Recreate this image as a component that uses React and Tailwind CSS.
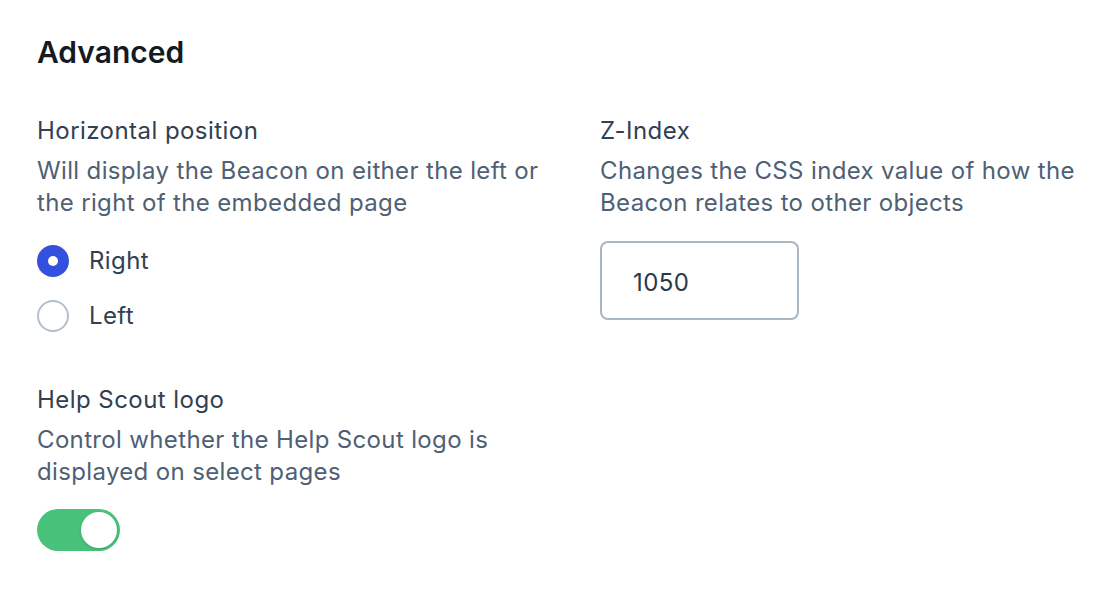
import { useState } from "react";

const Field = ({ label, hint, children }) => (
  <div className="flex flex-col">
    <p className="text-[24px] leading-[32px] tracking-[0.45px] text-[#314052]">{label}</p>
    <p className="mt-[8px] text-[24px] leading-[32px] tracking-[0.35px] text-[#4f6074]">{hint}</p>
    {children}
  </div>
);

const Radio = ({ checked, label, onClick }) => (
  <button onClick={onClick} className="flex items-center gap-[20px] h-[32px]">
    {checked ? (
      <span className="w-[32px] h-[32px] rounded-full bg-[#3451de] flex items-center justify-center">
        <span className="w-[10px] h-[10px] rounded-full bg-white" />
      </span>
    ) : (
      <span className="w-[32px] h-[32px] rounded-full border-2 border-[#b3bfca] bg-white" />
    )}
    <span className="text-[24px] leading-[32px] tracking-[0.4px] text-[#314052]">{label}</span>
  </button>
);

export default function App() {
  const [side, setSide] = useState("right");
  const [logo, setLogo] = useState(true);

  return (
    <div
      className="min-h-screen bg-white pt-[34px] pl-[37px]"
      style={{ fontFamily: "Inter, 'Noto Sans', sans-serif" }}
    >
      <h2 className="text-[30px] leading-[36px] font-semibold text-[#141a22]">Advanced</h2>

      <div className="mt-[45px] grid grid-cols-[563px_1fr]">
        <div className="flex flex-col">
          <Field
            label="Horizontal position"
            hint={
              <>
                Will display the Beacon on either the left or
                <br />
                the right of the embedded page
              </>
            }
          >
            <div className="mt-[26px] flex flex-col gap-[23px]">
              <Radio checked={side === "right"} label="Right" onClick={() => setSide("right")} />
              <Radio checked={side === "left"} label="Left" onClick={() => setSide("left")} />
            </div>
          </Field>

          <div className="mt-[52px]">
            <Field
              label="Help Scout logo"
              hint={
                <>
                  Control whether the Help Scout logo is
                  <br />
                  displayed on select pages
                </>
              }
            >
              <button
                onClick={() => setLogo(!logo)}
                className={`mt-[21px] w-[83px] h-[42px] rounded-full flex items-center px-[3px] ${
                  logo ? "bg-[#48c27a] justify-end" : "bg-[#c7d0d9] justify-start"
                }`}
              >
                <span className="w-[36px] h-[36px] rounded-full bg-white shadow-[0_1px_3px_rgba(0,0,0,0.15)]" />
              </button>
            </Field>
          </div>
        </div>

        <div>
          <Field
            label="Z-Index"
            hint={
              <>
                Changes the CSS index value of how the
                <br />
                Beacon relates to other objects
              </>
            }
          >
            <input
              defaultValue="1050"
              className="mt-[22px] w-[199px] h-[79px] rounded-[8px] border-2 border-[#aab6c3] pl-[31px] pt-[4px] text-[24px] tracking-[0.4px] text-[#2c3846] outline-none"
            />
          </Field>
        </div>
      </div>
    </div>
  );
}
